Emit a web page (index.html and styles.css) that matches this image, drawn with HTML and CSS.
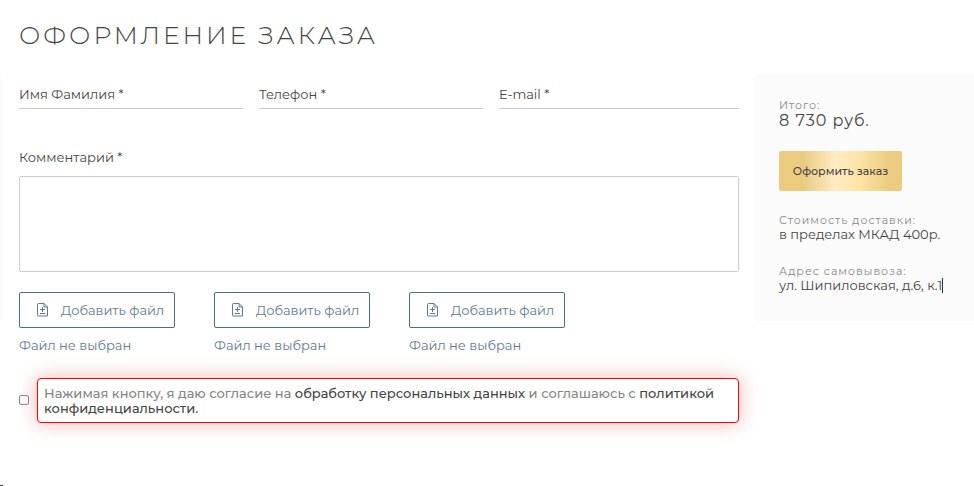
FILE: index.html
```html
<!DOCTYPE html>
<html lang="ru">
<head>
  <meta charset="UTF-8" />
  <meta name="viewport" content="width=device-width, initial-scale=1.0" />
  <title>Оформление заказа</title>
  <link rel="stylesheet" href="styles.css">
</head>
<body>
  <h1 class="page-title">ОФОРМЛЕНИЕ ЗАКАЗА</h1>

  <main class="checkout">
    <div class="edge"></div>

    <form class="order-form" id="order">
      <div class="fields">
        <div class="field">
          <label for="name">Имя Фамилия *</label>
          <input type="text" id="name" />
        </div>
        <div class="field">
          <label for="phone">Телефон *</label>
          <input type="tel" id="phone" />
        </div>
        <div class="field">
          <label for="email">E-mail *</label>
          <input type="email" id="email" />
        </div>
      </div>

      <div class="comment">
        <label for="comment">Комментарий *</label>
        <textarea id="comment"></textarea>
      </div>

      <div class="files">
        <div class="file">
          <button type="button" class="file-button">
            <svg class="file-icon" viewBox="0 0 11 14"><path d="M1.5 .5H7L10.5 4v9H1.5q-1 0-1-1V1.500q0-1 1-1z M7 .5V4h3.500 M5.500 4v5 M3 6.500h5 M3 10.500h5" /></svg>
            Добавить файл
          </button>
          <span class="file-status">Файл не выбран</span>
        </div>
        <div class="file">
          <button type="button" class="file-button">
            <svg class="file-icon" viewBox="0 0 11 14"><path d="M1.5 .5H7L10.5 4v9H1.5q-1 0-1-1V1.500q0-1 1-1z M7 .5V4h3.500 M5.500 4v5 M3 6.500h5 M3 10.500h5" /></svg>
            Добавить файл
          </button>
          <span class="file-status">Файл не выбран</span>
        </div>
        <div class="file">
          <button type="button" class="file-button">
            <svg class="file-icon" viewBox="0 0 11 14"><path d="M1.5 .5H7L10.5 4v9H1.5q-1 0-1-1V1.500q0-1 1-1z M7 .5V4h3.500 M5.500 4v5 M3 6.500h5 M3 10.500h5" /></svg>
            Добавить файл
          </button>
          <span class="file-status">Файл не выбран</span>
        </div>
      </div>

      <div class="agreement">
        <input type="checkbox" id="agree" />
        <label for="agree">Нажимая кнопку, я даю согласие на <a href="#">обработку персональных данных</a> и соглашаюсь с <a href="#">политикой конфиденциальности.</a></label>
      </div>
    </form>

    <aside class="summary">
      <div class="total">
        <span class="caption">Итого:</span>
        <span class="price">8 730 руб.</span>
      </div>
      <button type="submit" form="order" class="submit">Оформить заказ</button>
      <div class="info">
        <span class="caption">Стоимость доставки:</span>
        <span>в пределах МКАД 400р.</span>
      </div>
      <div class="info">
        <span class="caption">Адрес самовывоза:</span>
        <span class="address">ул. Шипиловская, д.6, к.1</span>
      </div>
    </aside>
  </main>

  <footer class="footer"></footer>
</body>
</html>
```

FILE: styles.css
```css
* {
  box-sizing: border-box;
}

body {
  margin: 0;
  min-height: 100vh;
  display: flex;
  flex-direction: column;
  background: #fff;
  color: #444;
  font-family: Montserrat, Inter, sans-serif;
  font-size: 13px;
  line-height: 15px;
}

button, input, textarea {
  font: inherit;
  color: inherit;
}

.page-title {
  margin: 0;
  padding: 19px 19px 23px;
  font-size: 25px;
  line-height: 32px;
  font-weight: 300;
  letter-spacing: 3px;
}

.checkout {
  display: grid;
  grid-template-columns: 3px 1fr 219px;
  grid-template-rows: auto 1fr;
  column-gap: 16px;
}

.edge {
  background: #fbfbfb;
}

.order-form {
  grid-row: span 2;
  padding-top: 12px;
}

.fields {
  display: grid;
  grid-template-columns: repeat(3, 1fr);
}

/* label lies in the empty input */
.field {
  display: grid;
  margin-right: 16px;
}

.field:last-child {
  margin-right: 0;
}

.field label,
.field input {
  grid-area: 1 / 1;
}

.field label {
  padding-top: 1px;
}

.field input {
  width: 100%;
  height: 23px;
  padding: 0;
  border: 0;
  border-bottom: 1px solid #ccc;
  background: transparent;
}

.comment {
  margin-top: 41px;
}

.comment label {
  display: block;
  margin-bottom: 11px;
}

.comment textarea {
  display: block;
  width: 100%;
  height: 96px;
  border: 1px solid #ccc;
  border-radius: 2px;
  resize: none;
}

.files {
  display: flex;
  gap: 39px;
  margin-top: 20px;
  color: #5f7a90;
}

.file-button {
  display: flex;
  align-items: center;
  gap: 13px;
  width: 156px;
  height: 36px;
  padding: 0 0 0 17px;
  border: 1px solid #4b6e88;
  border-radius: 2px;
  background: #fff;
  white-space: nowrap;
}

.file-icon {
  width: 11px;
  height: 14px;
  fill: none;
  stroke: currentColor;
  stroke-width: 1;
}

.file-status {
  display: block;
  margin-top: 10px;
}

.agreement {
  display: flex;
  align-items: center;
  gap: 8px;
  margin-top: 25px;
  color: #858585;
  font-weight: 500;
}

.agreement input {
  appearance: none;
  flex: none;
  width: 10px;
  height: 10px;
  margin: 0 0 2px;
  border: 1px solid #888;
  border-radius: 2px;
}

.agreement label {
  flex: 1;
  padding: 7px 6px 6px;
  border: 1px solid #f00;
  border-radius: 4px;
  background: #fff;
  box-shadow: 0 0 20px rgba(230, 0, 0, 0.3);
}

.agreement a {
  color: #444;
  text-decoration: none;
}

.summary {
  padding: 24px 24px 28px;
  background: #fbfbfb;
}

.summary span {
  display: block;
  white-space: nowrap;
}

.summary .caption {
  color: #888;
  font-size: 11px;
  line-height: 14px;
  letter-spacing: 1px;
}

.summary .price {
  font-size: 16px;
  line-height: 18px;
  letter-spacing: 1px;
}

.submit {
  width: 123px;
  height: 40px;
  margin: 21px 0 0;
  padding: 0;
  border: 0;
  border-radius: 2px;
  background: linear-gradient(90deg, #eacb80 0%, #eacb80 20%, #ffecc4 46%, #fde3a6 66%, #eacb80 90%);
  font-size: 11px;
  font-weight: 500;
}

.info {
  margin-top: 22px;
}

.summary .address {
  width: fit-content;
  border-right: 1px solid #234;
}

.footer {
  width: 3px;
  height: 1px;
  margin-top: auto;
  background: #333;
}
```
